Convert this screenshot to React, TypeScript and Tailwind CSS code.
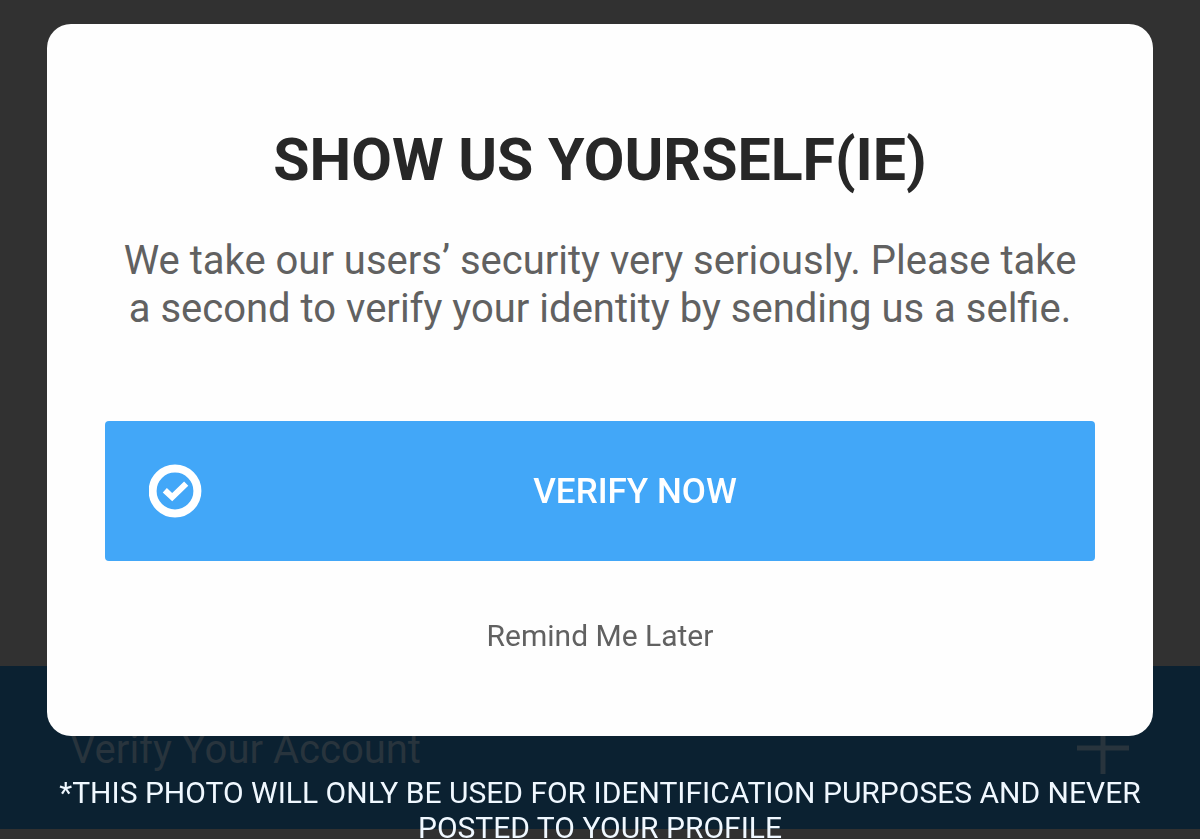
function CheckCircle() {
  return (
    <svg viewBox="0 0 54 54" className="w-[54px] h-[54px] shrink-0" fill="none" stroke="currentColor" aria-hidden="true">
      <circle cx="26" cy="27" r="22.4" strokeWidth="8" />
      <path d="M15.8 26.2 L23.2 33.2 L37.2 19.6" strokeWidth="6" />
    </svg>
  )
}

function PlusIcon() {
  return (
    <svg viewBox="0 0 54 54" className="w-[54px] h-[54px] shrink-0" fill="none" stroke="currentColor" strokeWidth="5" aria-hidden="true">
      <path d="M1 27 H53 M27 1 V53" />
    </svg>
  )
}

// Dimmed page behind the dialog
function ProfilePage() {
  return (
    <div className="min-h-screen flex flex-col bg-[#313131]" inert>
      <div className="flex-1" />
      <div className="h-[163px] px-[70px] flex items-center justify-between bg-[#0b2131] text-[#28343d]">
        <h2 className="pt-1 text-[40px] leading-[48px]">Verify Your Account</h2>
        <PlusIcon />
      </div>
      <div className="h-[10px]" />
    </div>
  )
}

function SelfieDialog() {
  return (
    <div className="fixed inset-0 overflow-hidden px-[47px] pt-6" role="dialog" aria-modal="true" aria-labelledby="selfie-title">
      <section className="bg-[#fefefe] rounded-3xl px-[58px] pt-[100px] pb-[76px] text-center text-[#616161]">
        <h1 id="selfie-title" className="text-[59px] leading-[72px] font-bold text-[#272727]">SHOW US YOURSELF(IE)</h1>
        <p className="mt-[41px] px-4 text-[40px] leading-[48px]">
          We take our users’ security very seriously. Please take a second to verify your identity by sending us a selfie.
        </p>
        <button
          type="button"
          className="mt-[88px] w-full h-[140px] pl-11 pr-7 flex items-center rounded bg-[#42a7f8] text-white text-[35px] leading-[48px] font-medium"
        >
          <CheckCircle />
          <span className="flex-1 pt-0.5">VERIFY NOW</span>
        </button>
        <button type="button" className="mt-[51px] text-[30px] leading-[48px]">Remind Me Later</button>
      </section>
      <p className="mt-[39px] text-center text-[30px] leading-[35px] text-[#f0f8ff]">
        *THIS PHOTO WILL ONLY BE USED FOR IDENTIFICATION PURPOSES AND NEVER POSTED TO YOUR PROFILE
      </p>
    </div>
  )
}

export default function App() {
  return (
    <main className="font-[Roboto,sans-serif]">
      <ProfilePage />
      <SelfieDialog />
    </main>
  )
}
